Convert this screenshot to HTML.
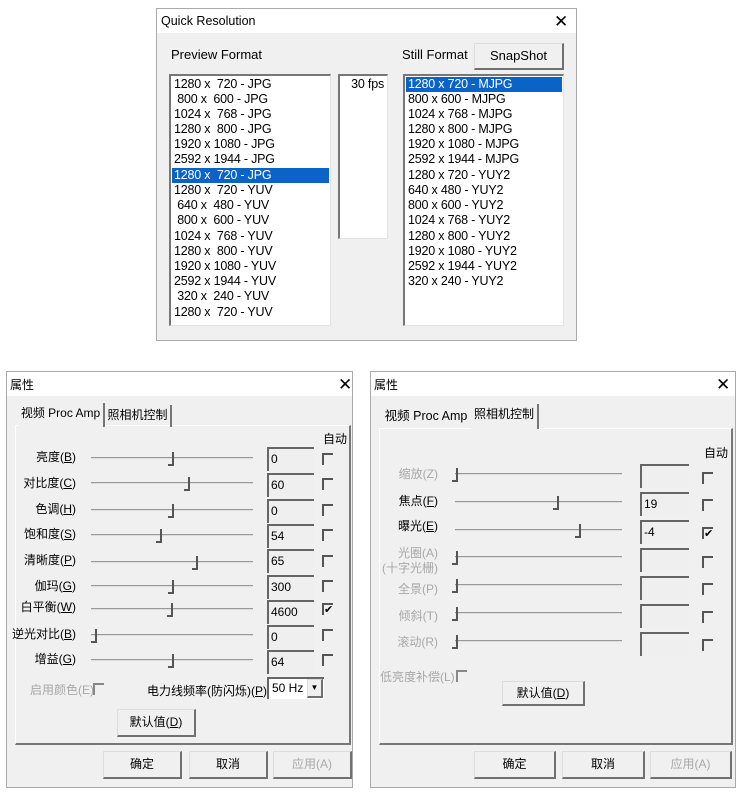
<!DOCTYPE html>
<html><head><meta charset="utf-8"><style>
*{box-sizing:border-box;margin:0;padding:0}
body{width:744px;height:792px;background:#fff;position:relative;overflow:hidden;font-family:"Liberation Sans","Noto Sans CJK SC",sans-serif;font-size:12px;color:#000}
.a{position:absolute;white-space:nowrap}
.win{position:absolute;background:#f0f0f0;border:1px solid #aaa}
.tb{position:absolute;left:0;top:0;right:0;height:24px;background:#fff}
.x{position:absolute;font-size:17px;line-height:17px}
.lb{position:absolute;background:#fff;border-left:2px solid #777;border-top:2px solid #777;border-right:1px solid #e3e3e3;border-bottom:1px solid #e3e3e3}
.row{position:absolute;left:1px;right:1px;height:15px;line-height:15px;padding-left:2px;font-size:12.5px;white-space:pre;letter-spacing:-0.2px}
.sel{background:#0a64c8;color:#fff}
.btn{position:absolute;white-space:nowrap;background:#f0f0f0;border-left:1px solid #ddd;border-top:1px solid #ddd;border-right:2px solid #707070;border-bottom:2px solid #707070;text-align:center}
.panel{position:absolute;border-right:2px solid #777;border-bottom:2px solid #777;border-left:1px solid #fff;border-top:1px solid #fff}
.lab{position:absolute;text-align:right;height:14px;line-height:14px;white-space:nowrap}
.g{color:#a8a8a8}
.sl{position:absolute;height:2px;background:#999;border-bottom:1px solid #ddd}
.th{position:absolute;width:6px;height:14px;border-right:2px solid #555;border-bottom:2px solid #555}
.ed{position:absolute;height:24px;border-left:2px solid #666;border-top:2px solid #666;background:#efefef;padding:2px 0 0 2px;line-height:16px}
.cb{position:absolute;width:11px;height:12px;border-left:2px solid #555;border-top:2px solid #555;font-size:11px;line-height:10px}
.tab{position:absolute;height:22px;line-height:20px;text-align:center;white-space:nowrap}
</style></head><body>

<div class="win" style="left:156px;top:8px;width:421px;height:333px">
 <div class="tb"></div>
 <div class="a" style="left:4px;top:5px;font-size:12.5px">Quick Resolution</div>
 <div class="x" style="left:397px;top:4px">✕</div>
 <div class="a" style="left:14px;top:38px;font-size:13px">Preview Format</div>
 <div class="a" style="left:245px;top:38px;font-size:13px">Still Format</div>
 <div class="btn" style="left:317px;top:34px;width:90px;height:27px;line-height:24px;font-size:13px">SnapShot</div>
 <div class="lb" style="left:12px;top:65px;width:162px;height:252px">
  <div class="row" style="top:1px">1280 x  720 - JPG</div>
  <div class="row" style="top:16px"> 800 x  600 - JPG</div>
  <div class="row" style="top:31px">1024 x  768 - JPG</div>
  <div class="row" style="top:46px">1280 x  800 - JPG</div>
  <div class="row" style="top:61px">1920 x 1080 - JPG</div>
  <div class="row" style="top:76px">2592 x 1944 - JPG</div>
  <div class="row sel" style="top:92px">1280 x  720 - JPG</div>
  <div class="row" style="top:107px">1280 x  720 - YUV</div>
  <div class="row" style="top:122px"> 640 x  480 - YUV</div>
  <div class="row" style="top:137px"> 800 x  600 - YUV</div>
  <div class="row" style="top:153px">1024 x  768 - YUV</div>
  <div class="row" style="top:168px">1280 x  800 - YUV</div>
  <div class="row" style="top:183px">1920 x 1080 - YUV</div>
  <div class="row" style="top:198px">2592 x 1944 - YUV</div>
  <div class="row" style="top:213px"> 320 x  240 - YUV</div>
  <div class="row" style="top:229px">1280 x  720 - YUV</div>
 </div>
 <div class="lb" style="left:181px;top:65px;width:50px;height:165px">
  <div class="row" style="top:1px;text-align:right;padding-right:2px">30 fps</div>
 </div>
 <div class="lb" style="left:246px;top:65px;width:161px;height:252px">
  <div class="row sel" style="top:1px">1280 x 720 - MJPG</div>
  <div class="row" style="top:16px">800 x 600 - MJPG</div>
  <div class="row" style="top:31px">1024 x 768 - MJPG</div>
  <div class="row" style="top:46px">1280 x 800 - MJPG</div>
  <div class="row" style="top:61px">1920 x 1080 - MJPG</div>
  <div class="row" style="top:76px">2592 x 1944 - MJPG</div>
  <div class="row" style="top:92px">1280 x 720 - YUY2</div>
  <div class="row" style="top:107px">640 x 480 - YUY2</div>
  <div class="row" style="top:122px">800 x 600 - YUY2</div>
  <div class="row" style="top:137px">1024 x 768 - YUY2</div>
  <div class="row" style="top:153px">1280 x 800 - YUY2</div>
  <div class="row" style="top:168px">1920 x 1080 - YUY2</div>
  <div class="row" style="top:183px">2592 x 1944 - YUY2</div>
  <div class="row" style="top:198px">320 x 240 - YUY2</div>
 </div>
</div>

<div class="win" style="left:6px;top:371px;width:347px;height:417px">
 <div class="tb"></div>
 <div class="a" style="left:3px;top:4px">属性</div>
 <div class="x" style="left:331px;top:4px">✕</div>
 <div class="panel" style="left:8px;top:53px;width:336px;height:320px"></div>
 <div class="tab" style="left:11px;top:31px;width:87px;background:#f0f0f0;border-right:2px solid #777;height:24px">视频 Proc Amp</div>
 <div class="tab" style="left:98px;top:33px;width:67px;border-right:2px solid #777">照相机控制</div>
 <div class="a" style="left:316px;top:58px">自动</div>
</div>
<div class="a" style="left:0;top:0">
 <div class="lab" style="left:10px;top:450px;width:66px">亮度(<u>B</u>)</div>
 <div class="lab" style="left:10px;top:476px;width:66px">对比度(<u>C</u>)</div>
 <div class="lab" style="left:10px;top:502px;width:66px">色调(<u>H</u>)</div>
 <div class="lab" style="left:10px;top:527px;width:66px">饱和度(<u>S</u>)</div>
 <div class="lab" style="left:10px;top:553px;width:66px">清晰度(<u>P</u>)</div>
 <div class="lab" style="left:10px;top:579px;width:66px">伽玛(<u>G</u>)</div>
 <div class="lab" style="left:10px;top:600px;width:66px">白平衡(<u>W</u>)</div>
 <div class="lab" style="left:10px;top:627px;width:66px">逆光对比(<u>B</u>)</div>
 <div class="lab" style="left:10px;top:652px;width:66px">增益(<u>G</u>)</div>

 <div class="sl" style="left:91px;top:457px;width:162px"></div><div class="th" style="left:168px;top:452px"></div>
 <div class="sl" style="left:91px;top:482px;width:162px"></div><div class="th" style="left:184px;top:477px"></div>
 <div class="sl" style="left:91px;top:509px;width:162px"></div><div class="th" style="left:168px;top:504px"></div>
 <div class="sl" style="left:91px;top:534px;width:162px"></div><div class="th" style="left:156px;top:529px"></div>
 <div class="sl" style="left:91px;top:561px;width:162px"></div><div class="th" style="left:192px;top:556px"></div>
 <div class="sl" style="left:91px;top:585px;width:162px"></div><div class="th" style="left:168px;top:580px"></div>
 <div class="sl" style="left:91px;top:608px;width:162px"></div><div class="th" style="left:167px;top:603px"></div>
 <div class="sl" style="left:91px;top:634px;width:162px"></div><div class="th" style="left:91px;top:629px"></div>
 <div class="sl" style="left:91px;top:659px;width:162px"></div><div class="th" style="left:168px;top:654px"></div>

 <div class="ed" style="left:267px;top:447px;width:47px">0</div>
 <div class="ed" style="left:267px;top:473px;width:47px">60</div>
 <div class="ed" style="left:267px;top:499px;width:47px">0</div>
 <div class="ed" style="left:267px;top:524px;width:47px">54</div>
 <div class="ed" style="left:267px;top:549px;width:47px">65</div>
 <div class="ed" style="left:267px;top:575px;width:47px">300</div>
 <div class="ed" style="left:267px;top:600px;width:47px">4600</div>
 <div class="ed" style="left:267px;top:625px;width:47px">0</div>
 <div class="ed" style="left:267px;top:650px;width:47px">64</div>

 <div class="cb" style="left:322px;top:453px"></div>
 <div class="cb" style="left:322px;top:478px"></div>
 <div class="cb" style="left:322px;top:504px"></div>
 <div class="cb" style="left:322px;top:529px"></div>
 <div class="cb" style="left:322px;top:555px"></div>
 <div class="cb" style="left:322px;top:580px"></div>
 <div class="cb" style="left:322px;top:603px">✔</div>
 <div class="cb" style="left:322px;top:629px"></div>
 <div class="cb" style="left:322px;top:654px"></div>

 <div class="a g" style="left:30px;top:681px">启用颜色(E)</div>
 <div class="cb" style="left:93px;top:683px;border-color:#888"></div>
 <div class="a" style="left:147px;top:682px">电力线频率(防闪烁)(<u>P</u>)</div>
 <div class="a" style="left:267px;top:677px;width:57px;height:22px;background:#fff;border-left:2px solid #666;border-top:2px solid #666;padding:1px 0 0 3px;line-height:16px">50 Hz</div>
 <div class="btn" style="left:307px;top:679px;width:16px;height:19px;font-size:8px;line-height:16px">▼</div>
 <div class="btn" style="left:117px;top:709px;width:79px;height:28px;line-height:25px">默认值(<u>D</u>)</div>
 <div class="btn" style="left:103px;top:751px;width:79px;height:28px;line-height:25px">确定</div>
 <div class="btn" style="left:189px;top:751px;width:79px;height:28px;line-height:25px">取消</div>
 <div class="btn g" style="left:273px;top:751px;width:79px;height:28px;line-height:25px">应用(A)</div>
</div>

<div class="win" style="left:370px;top:371px;width:366px;height:417px">
 <div class="tb"></div>
 <div class="a" style="left:3px;top:4px">属性</div>
 <div class="x" style="left:345px;top:4px">✕</div>
 <div class="panel" style="left:8px;top:56px;width:354px;height:317px"></div>
 <div class="tab" style="left:11px;top:34px;width:88px;font-size:12.5px">视频 Proc Amp</div>
 <div class="tab" style="left:100px;top:32px;width:68px;background:#f0f0f0;border-right:2px solid #777;height:25px">照相机控制</div>
 <div class="a" style="left:333px;top:72px">自动</div>
</div>
<div class="a" style="left:0;top:0">
 <div class="lab g" style="left:370px;top:467px;width:68px">缩放(Z)</div>
 <div class="lab" style="left:370px;top:494px;width:68px">焦点(<u>F</u>)</div>
 <div class="lab" style="left:370px;top:519px;width:68px">曝光(<u>E</u>)</div>
 <div class="lab g" style="left:370px;top:546px;width:68px">光圈(A)</div>
 <div class="lab g" style="left:370px;top:561px;width:68px">(十字光栅)</div>
 <div class="lab g" style="left:370px;top:582px;width:68px">全景(P)</div>
 <div class="lab g" style="left:370px;top:609px;width:68px">倾斜(T)</div>
 <div class="lab g" style="left:370px;top:635px;width:68px">滚动(R)</div>

 <div class="sl" style="left:455px;top:473px;width:167px"></div><div class="th" style="left:452px;top:468px"></div>
 <div class="sl" style="left:455px;top:501px;width:167px"></div><div class="th" style="left:553px;top:496px"></div>
 <div class="sl" style="left:455px;top:529px;width:167px"></div><div class="th" style="left:575px;top:524px"></div>
 <div class="sl" style="left:455px;top:556px;width:167px"></div><div class="th" style="left:452px;top:551px"></div>
 <div class="sl" style="left:455px;top:584px;width:167px"></div><div class="th" style="left:452px;top:579px"></div>
 <div class="sl" style="left:455px;top:612px;width:167px"></div><div class="th" style="left:452px;top:607px"></div>
 <div class="sl" style="left:455px;top:640px;width:167px"></div><div class="th" style="left:452px;top:635px"></div>

 <div class="ed" style="left:640px;top:464px;width:49px"></div>
 <div class="ed" style="left:640px;top:492px;width:49px">19</div>
 <div class="ed" style="left:640px;top:520px;width:49px">-4</div>
 <div class="ed" style="left:640px;top:548px;width:49px"></div>
 <div class="ed" style="left:640px;top:576px;width:49px"></div>
 <div class="ed" style="left:640px;top:604px;width:49px"></div>
 <div class="ed" style="left:640px;top:632px;width:49px"></div>

 <div class="cb" style="left:702px;top:472px"></div>
 <div class="cb" style="left:702px;top:499px"></div>
 <div class="cb" style="left:702px;top:527px">✔</div>
 <div class="cb" style="left:702px;top:556px"></div>
 <div class="cb" style="left:702px;top:583px"></div>
 <div class="cb" style="left:702px;top:611px"></div>
 <div class="cb" style="left:702px;top:639px"></div>

 <div class="a g" style="left:380px;top:668px">低亮度补偿(L)</div>
 <div class="cb" style="left:456px;top:670px;border-color:#888"></div>
 <div class="btn" style="left:502px;top:681px;width:83px;height:25px;line-height:22px">默认值(<u>D</u>)</div>
 <div class="btn" style="left:474px;top:751px;width:82px;height:28px;line-height:25px">确定</div>
 <div class="btn" style="left:562px;top:751px;width:83px;height:28px;line-height:25px">取消</div>
 <div class="btn g" style="left:650px;top:751px;width:82px;height:28px;line-height:25px">应用(A)</div>
</div>
</body></html>
